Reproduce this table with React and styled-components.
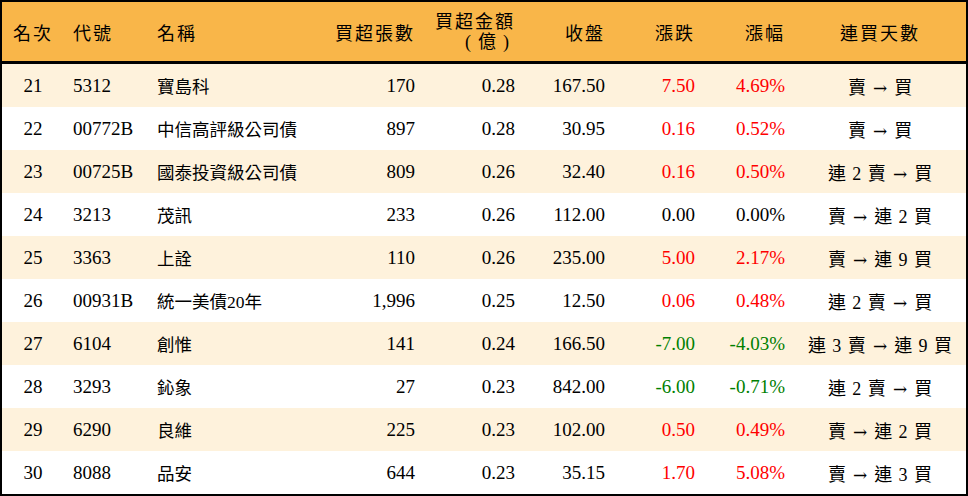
import React from "react";
import styled, { createGlobalStyle } from "styled-components";

const Global = createGlobalStyle`
  html, body { margin: 0; padding: 0; background: #fff; }
  body { font-family: "Liberation Serif", "Noto Sans CJK TC", serif; }
`;

const COLS = "62px 84px 182px 94px 100px 90px 90px 90px 172px";

const Table = styled.div`
  width: 968px;
  height: 496px;
  box-sizing: border-box;
  border: 2px solid #000;
  display: flex;
  flex-direction: column;
  font-family: "Liberation Serif", "Noto Sans CJK TC", serif;
  color: #000;
`;

const HeaderRow = styled.div`
  display: grid;
  grid-template-columns: ${COLS};
  height: 59px;
  background: #f9b649;
  border-bottom: 3px solid #000;
  align-items: center;
  font-size: 18px;
  letter-spacing: 2px;
`;

const Row = styled.div`
  display: grid;
  grid-template-columns: ${COLS};
  height: 43px;
  align-items: center;
  background: ${(p) => (p.$alt ? "#fef2dc" : "#ffffff")};
  font-size: 19px;
`;

const Cell = styled.div`
  box-sizing: border-box;
  white-space: nowrap;
  text-align: ${(p) => p.$align || "left"};
  padding: ${(p) =>
    p.$align === "right" ? "0 9px 0 0" : p.$align === "center" ? "0" : "0 0 0 9px"};
  color: ${(p) => (p.$tone === "up" ? "#ff0000" : p.$tone === "down" ? "#008000" : "#000")};
  line-height: ${(p) => (p.$twoLine ? "20px" : "normal")};
`;

const HeadLine = styled.div`
  letter-spacing: ${(p) => (p.$paren ? "0" : "inherit")};
  padding-right: ${(p) => (p.$paren ? "6px" : "0")};
`;

const Paren = styled.span`
  display: inline-block;
  margin: ${(p) => (p.$open ? "0 7px 0 0" : "0 0 0 7px")};
`;

const Cjk = styled.span`
  font-size: 17.5px;
`;

const Streak = styled.span`
  font-size: 18px;
  word-spacing: 2px;
`;

const Arrow = styled.span`
  display: inline-block;
  font-family: "DejaVu Serif", serif;
  font-size: 17px;
  margin: 0 7px;
`;

const headers = [
  { t: "名次", a: "center" },
  { t: "代號", a: "left" },
  { t: "名稱", a: "left" },
  { t: "買超張數", a: "right" },
  { t: "買超金額", a: "right", sub: "億" },
  { t: "收盤", a: "right" },
  { t: "漲跌", a: "right" },
  { t: "漲幅", a: "right" },
  { t: "連買天數", a: "center" },
];

const rows = [
  ["21", "5312", "寶島科", "170", "0.28", "167.50", "7.50", "4.69%", "賣 → 買"],
  ["22", "00772B", "中信高評級公司債", "897", "0.28", "30.95", "0.16", "0.52%", "賣 → 買"],
  ["23", "00725B", "國泰投資級公司債", "809", "0.26", "32.40", "0.16", "0.50%", "連 2 賣 → 買"],
  ["24", "3213", "茂訊", "233", "0.26", "112.00", "0.00", "0.00%", "賣 → 連 2 買"],
  ["25", "3363", "上詮", "110", "0.26", "235.00", "5.00", "2.17%", "賣 → 連 9 買"],
  ["26", "00931B", "統一美債20年", "1,996", "0.25", "12.50", "0.06", "0.48%", "連 2 賣 → 買"],
  ["27", "6104", "創惟", "141", "0.24", "166.50", "-7.00", "-4.03%", "連 3 賣 → 連 9 買"],
  ["28", "3293", "鈊象", "27", "0.23", "842.00", "-6.00", "-0.71%", "連 2 賣 → 買"],
  ["29", "6290", "良維", "225", "0.23", "102.00", "0.50", "0.49%", "賣 → 連 2 買"],
  ["30", "8088", "品安", "644", "0.23", "35.15", "1.70", "5.08%", "賣 → 連 3 買"],
];

function tone(v) {
  const n = parseFloat(v);
  if (n > 0) return "up";
  if (n < 0) return "down";
  return undefined;
}

function StreakText({ text }) {
  const [before, after] = text.split("→");
  return (
    <Streak>
      {before.trim()}
      <Arrow>→</Arrow>
      {after.trim()}
    </Streak>
  );
}

export default function App() {
  return (
    <>
      <Global />
      <Table>
        <HeaderRow>
          {headers.map((h, i) => (
            <Cell key={i} $align={h.a} $twoLine={!!h.sub}>
              <HeadLine>{h.t}</HeadLine>
              {h.sub && (
                <HeadLine $paren>
                  <Paren $open>(</Paren>
                  {h.sub}
                  <Paren>)</Paren>
                </HeadLine>
              )}
            </Cell>
          ))}
        </HeaderRow>
        {rows.map((r, i) => (
          <Row key={r[0]} $alt={i % 2 === 0}>
            <Cell $align="center">{r[0]}</Cell>
            <Cell>{r[1]}</Cell>
            <Cell>
              <Cjk>{r[2]}</Cjk>
            </Cell>
            <Cell $align="right">{r[3]}</Cell>
            <Cell $align="right">{r[4]}</Cell>
            <Cell $align="right">{r[5]}</Cell>
            <Cell $align="right" $tone={tone(r[6])}>{r[6]}</Cell>
            <Cell $align="right" $tone={tone(r[7])}>{r[7]}</Cell>
            <Cell $align="center">
              <StreakText text={r[8]} />
            </Cell>
          </Row>
        ))}
      </Table>
    </>
  );
}
